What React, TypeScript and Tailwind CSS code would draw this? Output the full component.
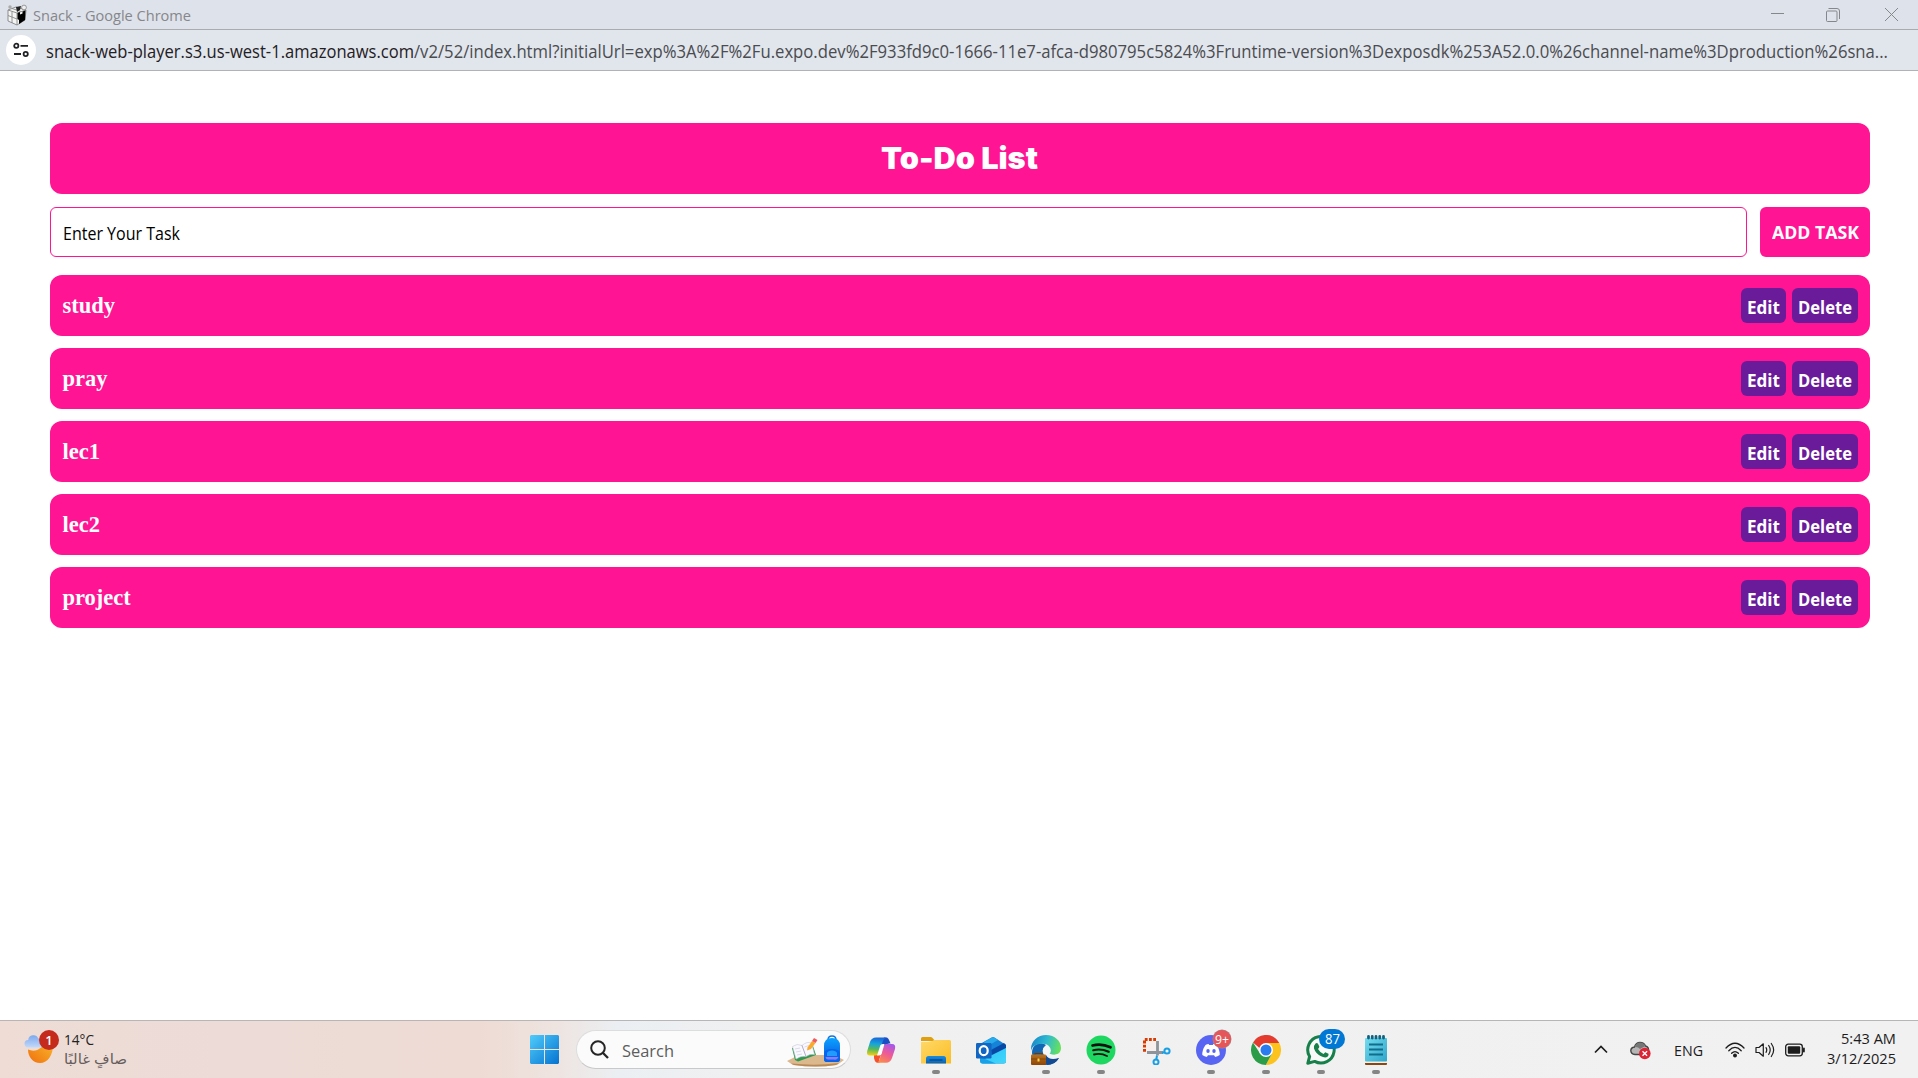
import { useLayoutEffect, useRef, useState, type ReactNode } from "react";

/** Single-line text squeezed or stretched horizontally to its box width. */
function Fit({ className, children }: { className: string; children: ReactNode }) {
  const outer = useRef<HTMLSpanElement>(null);
  const inner = useRef<HTMLSpanElement>(null);
  const [scale, setScale] = useState(1);
  useLayoutEffect(() => {
    if (outer.current && inner.current && inner.current.offsetWidth) {
      setScale(outer.current.clientWidth / inner.current.getBoundingClientRect().width);
    }
  }, []);
  return (
    <span ref={outer} className={`block shrink-0 whitespace-nowrap ${className}`}>
      <span ref={inner} className="inline-block origin-left" style={{ transform: `scaleX(${scale})` }}>
        {children}
      </span>
    </span>
  );
}

const tasks = ["study", "pray", "lec1", "lec2", "project"];

function TitleBar() {
  return (
    <div className="flex h-[30px] items-center border-b border-[#a9abae] bg-[#dee2ea] pl-[7px] pr-5">
      <svg width="21" height="22" viewBox="0 0 21 22" className="shrink-0">
        <path d="M1 6 L9 3 L19 6 L18 16 L10 21 L1 17Z" fill="#f4f4f5" stroke="#777" strokeWidth=".8" />
        <path d="M1 6 L10 9 L19 6 M10 9 V21 M5 7.5 V19 M1 11.5 L10 15 M5 4.5 L14 7.5" stroke="#888" fill="none" strokeWidth=".9" />
        <path d="M10.5 9 L13 8 V10.5 L15.5 9.5 V7.5 L18.5 6.5 L18 16 L12 20 V16 L10.5 15Z" fill="#000" />
        <path d="M9 3 L14 2 L13 6 L10 8Z" fill="#222" />
        <circle cx="17" cy="3.5" r="2.4" fill="#eee" stroke="#777" strokeWidth=".7" />
        <circle cx="3" cy="3" r="1.7" fill="#aaa" />
      </svg>
      <Fit className="ml-[5px] w-[158px] text-[15px] leading-[28px] text-[#85878b]">Snack - Google Chrome</Fit>
      <div className="ml-auto flex items-center text-[#85878b]">
        <svg width="13" height="13" viewBox="0 0 13 13"><path d="M0 5.5H13" stroke="currentColor" /></svg>
        <svg width="14" height="14" viewBox="0 0 14 14" className="ml-[42px]" fill="none" stroke="currentColor">
          <rect x=".5" y="3" width="10.5" height="10.5" rx="1" />
          <path d="M2.5 .5H11Q13.5 .5 13.5 3V11" />
        </svg>
        <svg width="13" height="13" viewBox="0 0 13 13" className="ml-[45px]"><path d="M0 0L13 13M13 0L0 13" stroke="currentColor" /></svg>
      </div>
    </div>
  );
}

function AddressBar() {
  return (
    <div className="flex h-[41px] items-center border-b border-[#b0b2b5] bg-[#e1e5ec] pl-[6px]">
      <span className="flex size-[30px] shrink-0 items-center justify-center rounded-full bg-white">
        <svg width="16" height="16" viewBox="0 0 16 16" fill="none" stroke="#202124" strokeWidth="1.8">
          <circle cx="3.3" cy="3.8" r="2.1" />
          <path d="M7.5 3.8H15M1 12H8" />
          <circle cx="12.7" cy="12" r="2.1" />
        </svg>
      </span>
      <Fit className="ml-[10px] w-[368px] pt-px text-[17.5px] leading-[38px] text-[#1f2023]">snack-web-player.s3.us-west-1.amazonaws.com</Fit>
      <Fit className="w-[1474px] pt-px text-[17.5px] leading-[38px] text-[#4a4c50]">
        /v2/52/index.html?initialUrl=exp%3A%2F%2Fu.expo.dev%2F933fd9c0-1666-11e7-afca-d980795c5824%3Fruntime-version%3Dexposdk%253A52.0.0%26channel-name%3Dproduction%26sna...
      </Fit>
    </div>
  );
}

function TaskRow({ name }: { name: string }) {
  return (
    <li className="flex h-[61px] items-center justify-between rounded-[12px] bg-[#ff1493] pl-[12.5px] pr-3">
      <span className="font-['Liberation_Serif',serif] text-[22.5px] font-bold leading-[26px] text-white">{name}</span>
      <div className="flex gap-[6px] text-[17.5px] font-bold text-white">
        <button className="flex h-[35px] w-[45px] items-center justify-center rounded-[6px] bg-[#6a1b9a] pt-[3px]">
          <Fit className="w-[33px] leading-[24px]">Edit</Fit>
        </button>
        <button className="flex h-[35px] w-[66px] items-center justify-center rounded-[6px] bg-[#6a1b9a] pt-[3px]">
          <Fit className="w-[54px] leading-[24px]">Delete</Fit>
        </button>
      </div>
    </li>
  );
}

function Weather() {
  return (
    <div className="flex w-[530px] items-center pl-6">
      <svg width="36" height="36" viewBox="0 0 36 36" className="-mt-1 shrink-0">
        <defs>
          <linearGradient id="moon" x1="1" y1="0" x2="0" y2="1"><stop stopColor="#f7b92c" /><stop offset="1" stopColor="#f0700f" /></linearGradient>
          <linearGradient id="cloud" x1="0" y1="0" x2="0" y2="1"><stop stopColor="#7ba8ee" /><stop offset="1" stopColor="#c2d9fa" /></linearGradient>
        </defs>
        <path d="M4 19.5C12 23 19 18 21 11L29 15C29 25 24 33 16 33C9 33 4 27 4 19.5Z" fill="url(#moon)" />
        <path d="M4.500 17.500a3.800 3.800 0 0 1-.3-7.600a5.200 5.200 0 0 1 10-1.500a4.700 4.700 0 0 1 2.500 9.100Z" fill="url(#cloud)" />
        <circle cx="25" cy="10" r="10" fill="#c42b1c" />
        <text x="25" y="14.800" textAnchor="middle" fontSize="13" fontWeight="600" fill="#fff" fontFamily="Open Sans">1</text>
      </svg>
      <div className="-mt-px ml-1 flex flex-col">
        <Fit className="w-[30px] text-[15px] leading-[20px] text-[#222]">14°C</Fit>
        <Fit className="w-[63px] text-[14px] leading-[20px] text-[#655d5b]"><span dir="rtl">صافٍ غالبًا</span></Fit>
      </div>
    </div>
  );
}

function SearchArt() {
  return (
    <svg width="58" height="32" viewBox="0 0 58 32">
      <defs>
        <linearGradient id="bag" x1="0" y1="0" x2="0" y2="1"><stop stopColor="#0aa2ff" /><stop offset="1" stopColor="#0b50dc" /></linearGradient>
      </defs>
      <path d="M1 26L13 20H48L58 25L51 30Q30 33 7 30Z" fill="#dcb88e" />
      <path d="M5 28.500Q30 31 53 28L50 30Q30 33 8 30Z" fill="#b98a58" />
      <path d="M6 13L26 8L30 20L12 26.500L9 25Z" fill="#2d9a50" />
      <path d="M6.500 11.500Q11 8 16 10.500Q21 6 25.500 8L28.500 19.500Q24 18.500 20 21.500Q15 20.500 10 24Z" fill="#faf8ff" stroke="#c9c4d8" strokeWidth=".6" />
      <path d="M16 10.500L20 21.500" stroke="#a9a3bf" strokeWidth=".9" />
      <path d="M9 14L14 13M10 17L15 16M11 20L16 19M18.500 12L23 10.500" stroke="#cfcbe0" strokeWidth=".7" />
      <path d="M21.500 12.500L26 6L29.500 8L25 14L21 15.500Z" fill="#fba92c" />
      <path d="M26 6L28 3L31.500 5L29.500 8Z" fill="#ef5a5f" />
      <path d="M42 5Q42 1 46 1Q50 1 50 5" fill="none" stroke="#1177dd" strokeWidth="1.500" />
      <path d="M38 11Q38 3 46 3Q54 3 54 11V24Q54 27 51 27H41Q38 27 38 24Z" fill="url(#bag)" />
      <path d="M38 18Q39 14 46 14Q53 14 54 18V24Q54 27 51 27H41Q38 27 38 24Z" fill="#0864ea" />
      <path d="M41 18Q42 15.500 46 15.500Q50 15.500 51 18V21H41Z" fill="#209bff" />
      <path d="M39.500 22H52.500Q51 25.500 48 24.500H42Q40 24.500 39.500 22Z" fill="#8d7bff" />
    </svg>
  );
}

function Copilot() {
  return (
    <svg width="30" height="30" viewBox="0 0 30 30">
      <defs>
        <linearGradient id="cpA" x1=".4" y1="0" x2=".3" y2="1"><stop stopColor="#1a66d8" /><stop offset=".35" stopColor="#16a5dc" /><stop offset=".65" stopColor="#57b95a" /><stop offset="1" stopColor="#f3cf10" /></linearGradient>
        <linearGradient id="cpB" x1=".8" y1="0" x2=".3" y2="1"><stop stopColor="#a457ee" /><stop offset=".5" stopColor="#ee5a96" /><stop offset="1" stopColor="#fb8a4b" /></linearGradient>
      </defs>
      <path d="M18 2.500H21Q22.500 3 23.500 6L24.500 8.500Q20 8 18 11L16 17L14 9Z" fill="#1a4fc4" />
      <path d="M8 20H15L13 25Q12.500 27.500 14 27.700H11Q9 27.500 8 23Z" fill="#f5512e" />
      <path d="M10 2.500H20Q17.500 3.500 16.500 7L13.500 17Q12.500 20.500 9 20.500H4Q.2 20.500 1.200 16L4 7Q5.500 2.500 10 2.500Z" fill="url(#cpA)" />
      <path d="M20 27.700H10.500Q13 27 14 23L17 13Q18 9 21 9H26Q30 9 29 14L26 23Q24.500 27.700 20 27.700Z" fill="url(#cpB)" />
      <path d="M14.500 10Q16 8.500 18.500 9L15.500 19Q14.500 21 11 20.500Z" fill="#fff" />
    </svg>
  );
}

function Folder() {
  return (
    <svg width="30" height="30" viewBox="0 0 30 30">
      <defs>
        <linearGradient id="fo" x1="0" y1="0" x2="1" y2="1"><stop stopColor="#ffd96a" /><stop offset="1" stopColor="#fbbd22" /></linearGradient>
        <linearGradient id="fb" x1="0" y1="0" x2="0" y2="1"><stop stopColor="#1a8be0" /><stop offset="1" stopColor="#0b63b4" /></linearGradient>
      </defs>
      <path d="M0 3.500Q0 2 1.500 2H10Q11 2 12 3.500L14 6H0Z" fill="#e0a00b" />
      <path d="M0 7Q10 7.500 13 5H28.500Q30 5 30 6.500V28.500H0Z" fill="url(#fo)" />
      <path d="M5 28.500V23.500Q5 21 7.500 21H22.500Q25 21 25 23.500V28.500Z" fill="url(#fb)" />
      <path d="M9 25H21" stroke="#084c8d" strokeWidth="1.400" strokeLinecap="round" />
    </svg>
  );
}

function Outlook() {
  return (
    <svg width="30" height="30" viewBox="0 0 30 30">
      <defs>
        <linearGradient id="ol" x1="0" y1="0" x2="1" y2="1"><stop stopColor="#28c5f5" /><stop offset="1" stopColor="#43d5fb" /></linearGradient>
      </defs>
      <path d="M4 9L15.500 2.500Q17 1.700 18.500 2.500L30 10V26Q30 28.500 27.500 28.500H7Q4 28.500 4 25Z" fill="#1483d8" />
      <path d="M8 7L16 2.500Q17 2 18 2.500L22 5L10 12Z" fill="#29aaea" />
      <path d="M15 15L28 8L30 10V13L16 22Z" fill="#0a48a5" />
      <path d="M14 21L30 13V26Q30 28.500 27.500 28.500H7Q5 28.500 4 27Z" fill="url(#ol)" />
      <path d="M4 22L20 28.500H7Q4 28.500 4 25Z" fill="#1aa0e6" />
      <rect y="8" width="15.500" height="15.500" rx="1.200" fill="#1066c2" />
      <ellipse cx="7.700" cy="15.700" rx="4" ry="4.500" fill="none" stroke="#fff" strokeWidth="2.200" />
    </svg>
  );
}

function Edge() {
  return (
    <svg width="30" height="30" viewBox="0 0 30 30">
      <defs>
        <linearGradient id="ed" x1="0" y1=".3" x2="1" y2=".5"><stop stopColor="#1687c9" /><stop offset=".5" stopColor="#2fbad0" /><stop offset="1" stopColor="#67e15b" /></linearGradient>
        <linearGradient id="br" x1="0" y1="0" x2="0" y2="1"><stop stopColor="#b8711f" /><stop offset="1" stopColor="#8f4605" /></linearGradient>
      </defs>
      <path d="M1 18C1 9 9 6 15 10Q11 13 12 18Q14 25 22 25Q26 24.500 28 23Q24 30 15 30Q2 30 1 18Z" fill="#1267b4" />
      <path d="M15 20Q18 26 28 23Q24 30 16 30L13 24Z" fill="#144a90" />
      <path d="M0 14C0 6 7 0 15 0C24 0 30 6 30 13C30 18 26 20 22 20C17 20 16 18 18 16C21 11 15 8 10 9C5 9 1 11 0 16Z" fill="url(#ed)" />
      <circle cx="15.800" cy="15.500" r="4" fill="#f4f5f6" />
      <path d="M17 17Q20 21 28 19L27 22Q20 25 15 19Z" fill="#f4f5f6" />
      <path d="M4 20V18.500H11V20" fill="none" stroke="#6d3a09" strokeWidth="1.200" />
      <rect y="19.500" width="15" height="10.500" rx="1" fill="url(#br)" />
      <path d="M0 24H15" stroke="#793d08" strokeWidth=".8" />
      <rect x="6.500" y="23.500" width="2" height="3" fill="#ffd349" />
    </svg>
  );
}

function Spotify() {
  return (
    <svg width="30" height="30" viewBox="0 0 30 30" fill="none" stroke="#111" strokeLinecap="round">
      <circle cx="15" cy="15" r="14.500" fill="#1ed760" stroke="none" />
      <path d="M6.500 10.500Q15.500 8 24.500 12.300" strokeWidth="2.700" />
      <path d="M7.300 15.200Q15 13.200 22.700 16.800" strokeWidth="2.200" />
      <path d="M8 19.500Q15 17.900 21 21" strokeWidth="1.800" />
    </svg>
  );
}

function Snip() {
  return (
    <svg width="30" height="30" viewBox="0 0 30 30" fill="none">
      <rect x="3.500" y="4.500" width="11" height="12" fill="#f8efec" />
      <path d="M16.500 6V20.500M6 17.500H22" stroke="#8d949b" strokeWidth="2.800" />
      <path d="M15 4.500H3.500V17" stroke="#d83b01" strokeWidth="3" strokeDasharray="2.800 1.400" />
      <circle cx="26" cy="16" r="2.600" stroke="#1b9fe3" strokeWidth="2" />
      <circle cx="15" cy="27" r="2.500" stroke="#1b9fe3" strokeWidth="2" />
      <path d="M21 18L24 17M16 20.500L15.300 24.500" stroke="#1b9fe3" strokeWidth="2" />
    </svg>
  );
}

function Discord() {
  return (
    <div className="relative size-[30px]">
      <svg width="30" height="30" viewBox="0 0 30 30">
        <circle cx="15" cy="15" r="15" fill="#5865f2" />
        <path d="M9.500 10Q11 9.200 12.600 9L13.200 10H16.800L17.400 9Q19 9.200 20.500 10Q24 15 23.700 20Q21.500 21.300 19.200 22L18 20.300H12L10.800 22Q8.500 21.300 6.300 20Q6 15 9.500 10Z" fill="#fff" />
        <ellipse cx="12" cy="16" rx="1.700" ry="1.900" fill="#5865f2" />
        <ellipse cx="18" cy="16" rx="1.700" ry="1.900" fill="#5865f2" />
      </svg>
      <span className="absolute -top-[5px] left-[17px] flex size-[18px] items-center justify-center rounded-full bg-[#e5565a] text-[13px] leading-none text-white ring-[0.5px] ring-[#a88]">
        <Fit className="w-[14px]">9+</Fit>
      </span>
    </div>
  );
}

function Chrome() {
  return (
    <svg width="30" height="30" viewBox="0 0 30 30">
      <path d="M15 8H28.300A15 15 0 0 1 14.800 30L21 18.500Z" fill="#fcc31e" />
      <path d="M2 7.500A15 15 0 0 1 28.300 8H15L8.500 13Z" fill="#e33b2e" />
      <path d="M2 7.500A15 15 0 0 0 14.800 30L21 18.500H9Z" fill="#2b9c48" />
      <circle cx="15" cy="15" r="7" fill="#fff" />
      <circle cx="15" cy="15" r="5.500" fill="#2a7bee" />
    </svg>
  );
}

function WhatsApp() {
  return (
    <div className="relative size-[30px]">
      <svg width="30" height="30" viewBox="0 0 30 30">
        <path d="M1.800 28.300L3.600 21.500A13.200 13.200 0 1 1 8.700 26.400Z" fill="#f7faf8" stroke="#17804a" strokeWidth="3" strokeLinejoin="round" />
        <path d="M9.500 8.500Q11 7.500 12 8.800L13.300 11.500Q13.400 12.500 12 14Q14 17.500 17.500 19L19.300 17.300L22.500 18.800Q23 20.500 21.500 21.800Q19 23.500 14.500 21Q9.500 18 8 13.500Q7.500 10.500 9.500 8.500Z" fill="#17804a" />
      </svg>
      <span className="absolute -top-[6px] left-[13px] flex h-5 w-[26px] items-center justify-center rounded-full bg-[#0078d4] text-[14px] leading-none text-white">
        <Fit className="w-[15px]">87</Fit>
      </span>
    </div>
  );
}

function Notepad() {
  return (
    <svg width="30" height="30" viewBox="0 0 30 30">
      <defs>
        <linearGradient id="np" x1="0" y1="0" x2="1" y2="1"><stop stopColor="#74dcee" /><stop offset="1" stopColor="#2fa6cb" /></linearGradient>
      </defs>
      <rect x="4" y="24" width="22" height="6" rx="1" fill="#8a4712" />
      <rect x="4" y="24" width="22" height="4" fill="#f3efe9" />
      <rect x="4" y="3" width="22" height="23.500" rx="1" fill="url(#np)" />
      <path d="M7.500 1.500V3M11.250 1.500V3M15 1.500V3M18.750 1.500V3M22.500 1.500V3" stroke="#12627f" strokeWidth="2.800" strokeLinecap="round" />
      <path d="M8 9.500H22M8 14.500H22M8 19.500H22" stroke="#106d8c" strokeWidth="2" />
    </svg>
  );
}

const apps = [
  { id: "copilot", icon: <Copilot />, running: false },
  { id: "folder", icon: <Folder />, running: true },
  { id: "outlook", icon: <Outlook />, running: false },
  { id: "edge", icon: <Edge />, running: true },
  { id: "spotify", icon: <Spotify />, running: true },
  { id: "snip", icon: <Snip />, running: false },
  { id: "discord", icon: <Discord />, running: true },
  { id: "chrome", icon: <Chrome />, running: true },
  { id: "whatsapp", icon: <WhatsApp />, running: true },
  { id: "notepad", icon: <Notepad />, running: true },
];

function Tray() {
  return (
    <div className="ml-auto flex items-center pr-[22px] text-[#1c1c1c]">
      <svg width="14" height="9" viewBox="0 0 14 9" fill="none" stroke="currentColor" strokeWidth="1.700"><path d="M1 7.500L7 1.500L13 7.500" /></svg>
      <svg width="21" height="19" viewBox="0 0 21 19" className="ml-[22px] mt-0.5">
        <path d="M5 13.500Q.8 13 .8 9.500Q1 6.500 4.500 6Q6 1.500 10 1.500Q14 1.500 15.500 5Q19 6 18.500 10L14 13.500Z" fill="#b5b5b5" stroke="#444" strokeWidth="1.400" />
        <path d="M4.500 6Q6 1.500 10 1.500Q14 1.500 15.500 5L10 8Q8 5.500 4.500 6Z" fill="#777" />
        <circle cx="14.800" cy="12.500" r="5.800" fill="#dc2434" />
        <path d="M12.500 10.200L17.100 14.800M17.100 10.200L12.500 14.800" stroke="#fff" strokeWidth="1.300" />
      </svg>
      <Fit className="ml-[23px] mt-px w-[29px] text-[15px] leading-[20px]">ENG</Fit>
      <svg width="20" height="16" viewBox="0 0 20 16" className="ml-[22px]" fill="none" stroke="currentColor" strokeWidth="1.300" strokeLinecap="round">
        <path d="M1 6Q10-3.500 19 6M3.800 8.700Q10 2.200 16.200 8.700M6.600 11.300Q10 7.800 13.400 11.300" />
        <circle cx="10" cy="13.500" r="1.300" fill="currentColor" />
      </svg>
      <svg width="20" height="16" viewBox="0 0 20 16" className="ml-[10px]" fill="none" stroke="currentColor" strokeWidth="1.200" strokeLinecap="round" strokeLinejoin="round">
        <path d="M1 5.500H4L8.300 1.800V14.200L4 10.500H1Z" />
        <path d="M11 5.700Q12.500 8 11 10.300M13.700 3.500Q16.700 8 13.700 12.500M16.300 1.500Q21 8 16.300 14.500" />
      </svg>
      <svg width="21" height="14" viewBox="0 0 21 14" className="ml-[10px]">
        <rect x=".7" y="1.200" width="16.600" height="11.600" rx="2.500" fill="none" stroke="currentColor" strokeWidth="1.300" />
        <rect x="2.800" y="3.300" width="12.400" height="7.400" rx="1" fill="currentColor" />
        <path d="M18.900 5.500V8.500" stroke="currentColor" strokeWidth="1.800" strokeLinecap="round" />
      </svg>
      <div className="-mt-px ml-[21px] flex w-[69px] flex-col items-end text-[14.5px] leading-[20px]">
        <Fit className="w-[55px]">5:43 AM</Fit>
        <Fit className="w-[69px]">3/12/2025</Fit>
      </div>
    </div>
  );
}

function Taskbar() {
  return (
    <footer className="flex h-[58px] border-t border-[#b7b5b5] bg-[linear-gradient(90deg,#eedcd5_0px,#ecdbd7_220px,#eedbd4_480px,#eee4e0_555px,#ebeff3_620px,#f0f0f0_760px,#f1f1f1_100%)]">
      <Weather />
      <div className="flex items-center">
        <svg width="29" height="29" viewBox="0 0 29 29">
          <defs>
            <linearGradient id="win" gradientUnits="userSpaceOnUse" x1="0" y1="0" x2="29" y2="29"><stop stopColor="#51ccfb" /><stop offset="1" stopColor="#0473d0" /></linearGradient>
          </defs>
          <path d="M1 0H14V14H0V1ZM15 0H28L29 1V14H15ZM0 15H14V29H1L0 28ZM15 15H29V28L28 29H15Z" fill="url(#win)" />
        </svg>
        <div className="ml-[17px] flex h-[39px] w-[275px] items-center rounded-full border border-[#dcdddd] border-b-[#c9c9c9] bg-[#fbfbfb] pl-[13px] pr-[6px]">
          <svg width="19" height="19" viewBox="0 0 19 19" fill="none" stroke="#252525" strokeWidth="2"><circle cx="8" cy="8" r="6.800" /><path d="M12.800 12.800L18 18" strokeWidth="2.300" /></svg>
          <Fit className="ml-[13px] mt-0.5 w-[52px] text-[17px] leading-[24px] text-[#5d5d5d]">Search</Fit>
          <div className="ml-auto pt-0.5"><SearchArt /></div>
        </div>
        <div className="ml-[2.5px] flex h-full">
          {apps.map((app) => (
            <div key={app.id} className="flex w-[55px] flex-col items-center pt-[14px]">
              {app.icon}
              {app.running && <span className="mt-[5px] h-1 w-2 rounded-full bg-[#858585]" />}
            </div>
          ))}
        </div>
      </div>
      <Tray />
    </footer>
  );
}

export default function App() {
  return (
    <div className="flex h-screen flex-col overflow-hidden bg-white font-['Open_Sans','DejaVu_Sans',sans-serif]">
      <TitleBar />
      <AddressBar />
      <main className="flex-1 pl-[50px] pr-12 pt-[52px]">
        <header className="flex h-[71px] items-center justify-center rounded-[12px] bg-[#ff1493]">
          <h1 className="-ml-0.5 -mt-0.5 font-['Inter',sans-serif] text-[30px] font-black leading-[36px] text-white">
            <Fit className="w-[157px]">To-Do List</Fit>
          </h1>
        </header>
        <div className="mt-[13px] flex h-[50px] gap-[13px]">
          <div className="flex flex-1 items-center rounded-[6px] border border-[#ff1493] pl-[12px] pt-0.5">
            <Fit className="w-[117px] text-[17.5px] leading-[24px] text-black">Enter Your Task</Fit>
          </div>
          <button className="flex w-[110px] items-center justify-center rounded-[6px] bg-[#ff1493] text-[17.5px] font-bold text-white">
            <Fit className="w-[87px] leading-[24px]">ADD TASK</Fit>
          </button>
        </div>
        <ul className="mt-[18px] flex flex-col gap-3">
          {tasks.map((t) => (
            <TaskRow key={t} name={t} />
          ))}
        </ul>
      </main>
      <Taskbar />
    </div>
  );
}
